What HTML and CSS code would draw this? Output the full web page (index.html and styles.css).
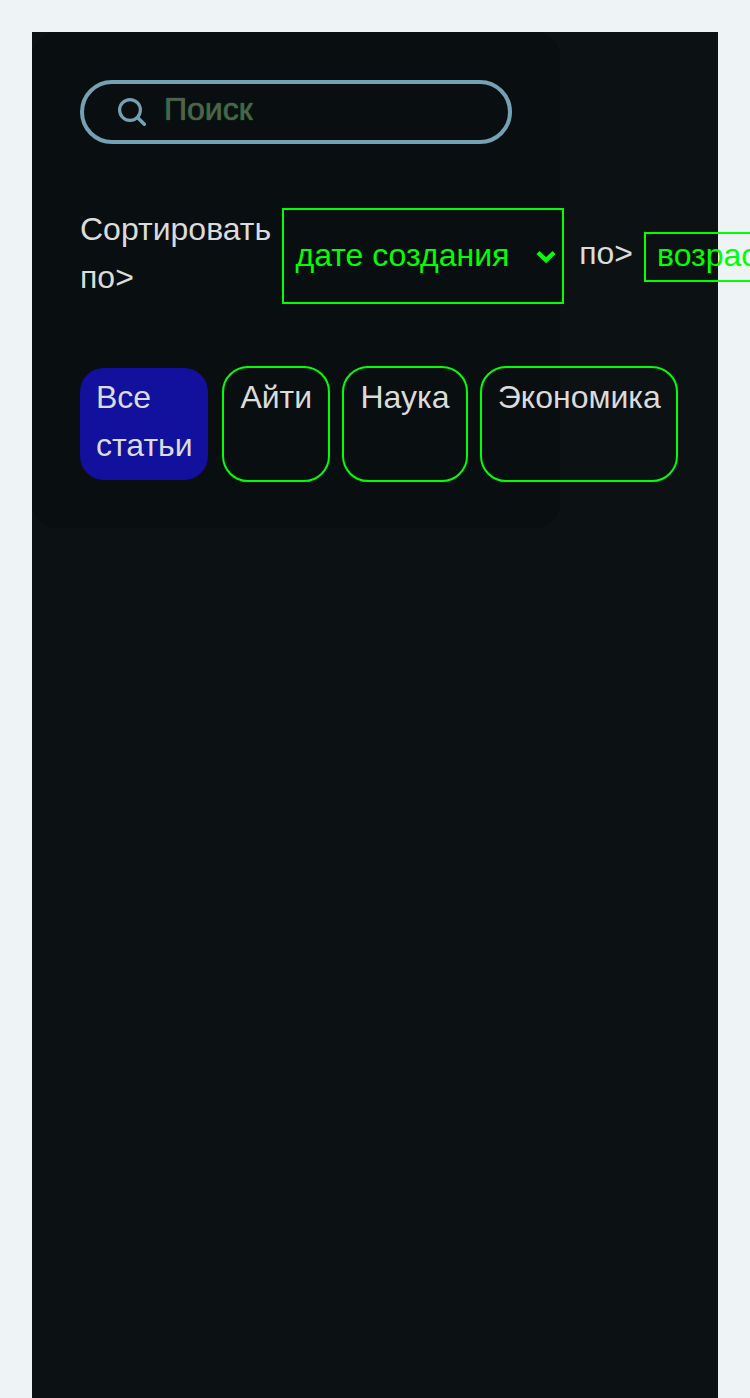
FILE: index.html
```html
<!DOCTYPE html>
<html lang="ru">
<head>
<meta charset="utf-8">
<title>Статьи</title>
<link rel="stylesheet" href="styles.css">
</head>
<body>
<main class="page">
  <section class="panel">
    <label class="search">
      <svg class="search-icon" viewBox="0 0 28 28" fill="none" stroke="#74a2b2" stroke-width="3.2" stroke-linecap="round"><circle cx="12" cy="12" r="10.4"/><path stroke-width="3.6" d="M20 20L26.3 26.3"/></svg>
      <span class="search-text">Поиск</span>
    </label>
    <div class="sort">
      <span class="sort-label">Сортировать по&gt;</span>
      <div class="select select-field"><span>дате создания</span>
        <svg class="chevron" viewBox="0 0 20 14" fill="none" stroke="#00ff00" stroke-width="4.4"><path d="M2 2.5L10 10.3L18 2.5"/></svg>
      </div>
      <span class="order-label">по&gt;</span>
      <div class="select select-order"><span>возрастанию</span></div>
    </div>
    <nav class="tabs">
      <div class="tab active">Все статьи</div>
      <div class="tab tab-it">Айти</div>
      <div class="tab tab-science">Наука</div>
      <div class="tab tab-economy">Экономика</div>
    </nav>
  </section>
</main>
</body>
</html>
```
FILE: styles.css
```css
* { box-sizing: border-box; }
html { overflow: hidden; }
body { margin: 0; padding: 32px 32px 0; overflow: hidden; background: #eef3f6; color: #dbdbdb; font: 32px/48px "Liberation Sans", Arial, sans-serif; }
.page { height: 1366px; background: #0c1214; }
.panel { width: 528px; height: 496px; padding: 48px; border-radius: 24px; background: #090e10; }
.search { display: flex; align-items: center; width: 432px; height: 64px; padding-left: 34px; border: 4px solid #74a2b2; border-radius: 32px; }
.search-icon { width: 28px; height: 28px; }
.search-text { margin: -7px 0 0 18px; color: #5a5a5a; text-shadow: 0 0 1px #008800, 0 0 1px #008800; }
.sort { display: flex; align-items: center; width: max-content; height: 96px; margin-top: 64px; }
.sort-label { width: 202px; margin-top: -6px; }
.select { display: flex; align-items: center; border: 2px solid #00ff00; color: #00ff00; white-space: nowrap; }
.select span { margin-top: -2px; }
.select-field { width: 282px; height: 96px; padding-left: 11.5px; }
.chevron { width: 20px; height: 14px; margin: 2px 0 0 26.5px; }
.order-label { width: 64.8px; margin: -6px 0 0 15.2px; }
.select-order { width: 240px; height: 50px; margin-top: 2px; padding-left: 11px; }
.select-order span { margin-top: -4px; }
.tabs { display: flex; width: max-content; margin-top: 62px; gap: 12px; }
.tab { height: 116px; padding: 5px 0 0 16.4px; border: 2px solid #00ff00; border-radius: 26px; white-space: nowrap; }
.tab-it { width: 108px; }
.tab-science { width: 126px; }
.tab-economy { width: 198px; padding-left: 15.8px; }
.tab.active { width: 128px; height: 112px; margin: 2px 2px 0 0; padding: 5px 16px 0; border: 0; border-radius: 24px; background: #11119d; white-space: normal; }
```
